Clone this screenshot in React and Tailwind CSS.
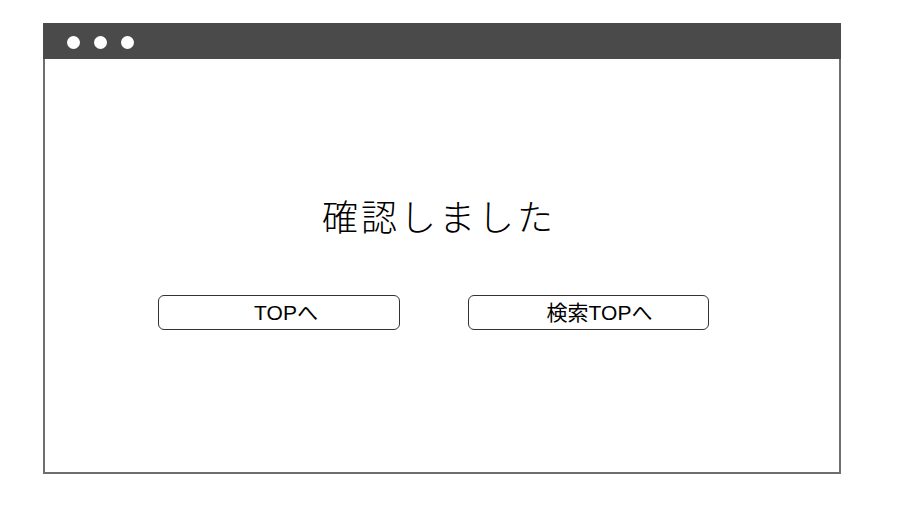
export default function App() {
  return (
    <div className="w-[903px] h-[507px] bg-white relative" style={{ fontFamily: '"Liberation Sans", "Noto Sans CJK JP", sans-serif' }}>
      <div className="pt-[23px] pl-[43px]">
        <div className="w-[798px] h-[451px] border-2 border-[#6e6e6e] flex flex-col">
          <div className="h-[36px] -mt-[2px] -mx-[2px] bg-[#4a4a4a] flex items-center pl-[24px] gap-[14px] pt-[2px]">
            <div className="w-[13px] h-[13px] rounded-full bg-white" />
            <div className="w-[13px] h-[13px] rounded-full bg-white" />
            <div className="w-[13px] h-[13px] rounded-full bg-white" />
          </div>
          <div className="flex-1 flex flex-col">
            <div className="pt-[138px] flex justify-center">
              <h1
                className="text-[36px] leading-[36px] tracking-[3px] font-light text-black mr-[6px]"
                style={{ fontFamily: '"Noto Sans CJK JP", sans-serif' }}
              >
                確認しました
              </h1>
            </div>
            <div className="mt-[62px] flex pl-[113px] gap-[68px]">
              <button className="w-[242px] h-[35px] border border-[#333] rounded-[6px] text-[21px] leading-none text-black flex items-center justify-center pl-[14px]">
                TOPへ
              </button>
              <button className="w-[241px] h-[35px] border border-[#333] rounded-[6px] text-[21px] leading-none text-black flex items-center justify-center pl-[22px]">
                検索TOPへ
              </button>
            </div>
          </div>
        </div>
      </div>
    </div>
  );
}
